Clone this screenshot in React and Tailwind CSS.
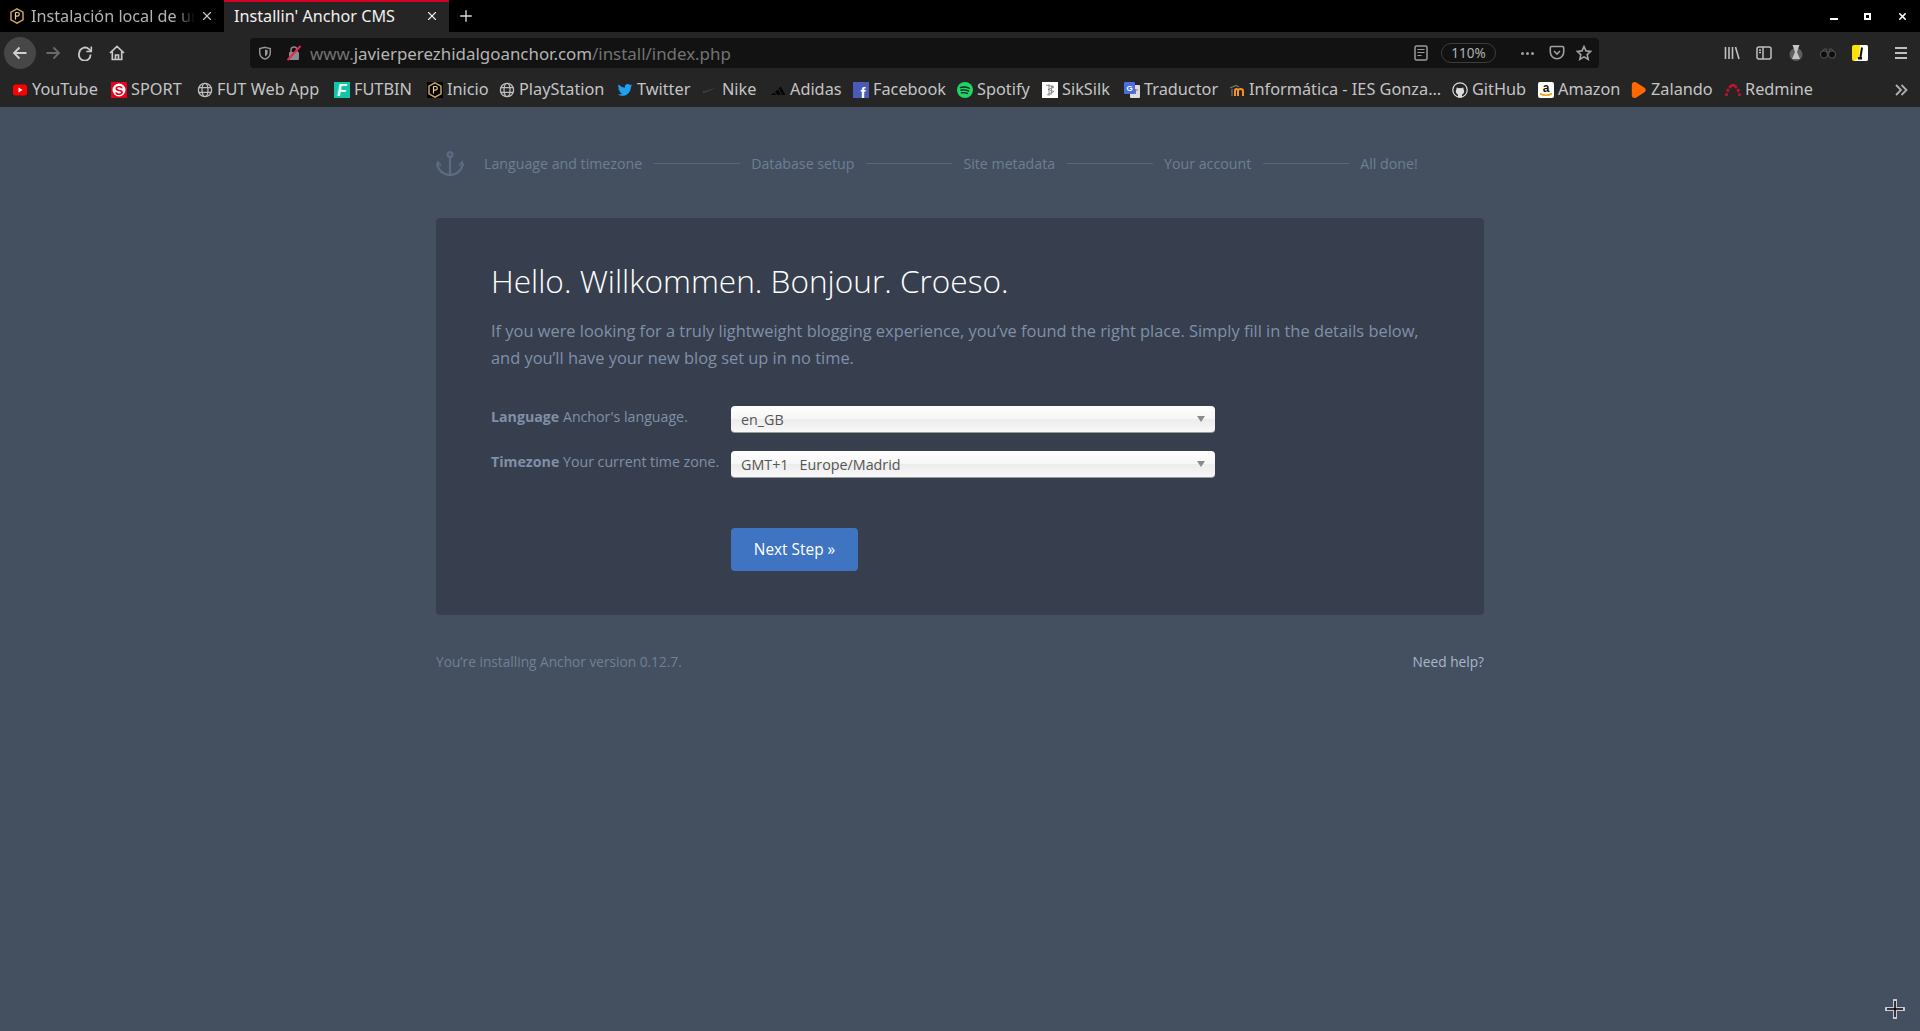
import { Plus, X } from "lucide-react";

const uiFont = "font-['Noto_Sans',sans-serif]";

function HexLogo({ bg = false }) {
  return (
    <svg width="16" height="16" viewBox="0 0 16 16" fill="none">
      {bg && <rect width="16" height="16" fill="#000" />}
      <path d="M8 .8l6 3.400v7.600l-6 3.400-6-3.400V4.200z" stroke="#c9a35a" strokeWidth="1.500" />
      <path d="M6.500 4.500v7M6.500 4.500h2a1.800 1.800 0 010 3.600h-2" stroke="#e6cf98" strokeWidth="1.200" />
    </svg>
  );
}

function Globe() {
  return (
    <svg width="16" height="16" viewBox="0 0 16 16" fill="none" stroke="#bdbdbd" strokeWidth="1.300">
      <circle cx="8" cy="8" r="6.600" />
      <ellipse cx="8" cy="8" rx="3" ry="6.600" />
      <path d="M1.600 5.700h12.800M1.600 10.300h12.800" />
    </svg>
  );
}

const icons = {
  youtube: (
    <svg width="16" height="16" viewBox="0 0 16 16">
      <rect x="1" y="2.500" width="14" height="11" rx="2.500" fill="#f00" />
      <path d="M6.500 5.500l4 2.500-4 2.500z" fill="#fff" />
    </svg>
  ),
  sport: (
    <svg width="16" height="16" viewBox="0 0 16 16">
      <rect width="16" height="16" fill="#e8001c" />
      <circle cx="8" cy="8" r="6.500" fill="#fff" />
      <text x="8" y="12.500" textAnchor="middle" fontSize="13" fontWeight="700" fill="#e8001c" fontFamily="Liberation Sans">S</text>
    </svg>
  ),
  globe: <Globe />,
  futbin: (
    <svg width="16" height="16" viewBox="0 0 16 16">
      <rect width="16" height="16" fill="#0fc7a8" />
      <text x="8" y="14" textAnchor="middle" fontSize="16" fontWeight="700" fontStyle="italic" fill="#fff" fontFamily="Liberation Sans">F</text>
    </svg>
  ),
  hex: <HexLogo bg />,
  twitter: (
    <svg width="16" height="16" viewBox="0 0 24 24" fill="#1da1f2">
      <path d="M23 5.100a9 9 0 01-2.600.7 4.500 4.500 0 002-2.500 9 9 0 01-2.900 1.100 4.500 4.500 0 00-7.700 4.100A12.800 12.800 0 012.500 3.800a4.500 4.500 0 001.400 6 4.500 4.500 0 01-2-.6c0 2.200 1.500 4 3.600 4.500a4.500 4.500 0 01-2 .1 4.500 4.500 0 004.200 3.100A9 9 0 011 18.800 12.800 12.800 0 007.900 20.800c8.300 0 12.900-6.900 12.900-12.900v-.6A9 9 0 0023 5.100z" />
    </svg>
  ),
  nike: (
    <svg width="16" height="16" viewBox="0 0 16 16">
      <path d="M15.500 5L4 10.500c-1.500.6-3 .5-3.300-.5-.1-.6.2-1.200.8-1.900-.2.800.2 1.200 1 1.100z" fill="#3f3f3f" />
    </svg>
  ),
  adidas: (
    <svg width="16" height="16" viewBox="0 0 16 16" fill="#050505">
      <path d="M1 13l3.300-2.500L6 13zM5.200 9.500L8 7.500 11 13H7.200zM8.800 6.200L10.800 4.500 15.500 13H12.300z" />
    </svg>
  ),
  facebook: (
    <svg width="16" height="16" viewBox="0 0 16 16">
      <rect width="16" height="16" fill="#4a5bb5" />
      <text x="10" y="16" textAnchor="middle" fontSize="15" fontWeight="700" fill="#fff" fontFamily="Liberation Sans">f</text>
    </svg>
  ),
  spotify: (
    <svg width="16" height="16" viewBox="0 0 16 16" fill="none">
      <circle cx="8" cy="8" r="8" fill="#1ed760" />
      <path d="M3.500 5.500c3-.8 6-.6 9 .8M4 8.200c2.600-.6 5-.4 7.600.8M4.500 10.800c2-.4 4-.3 6 .7" stroke="#123" strokeWidth="1.400" strokeLinecap="round" />
    </svg>
  ),
  siksilk: (
    <svg width="16" height="16" viewBox="0 0 16 16" fill="none">
      <rect width="16" height="16" fill="#fff" />
      <path d="M4 3l8 2-6 2.500 6 2-7 3.500M7 2v12M10 3l-1 10" stroke="#777" strokeWidth="0.800" />
    </svg>
  ),
  translate: (
    <svg width="16" height="16" viewBox="0 0 16 16">
      <rect x="6" y="3" width="10" height="13" rx="1" fill="#ddd" />
      <path d="M9 8h5M11.500 7v5" stroke="#777" strokeWidth="1" />
      <rect width="11" height="12" rx="1" fill="#4a6ee0" />
      <text x="5.500" y="9" textAnchor="middle" fontSize="8" fontWeight="700" fill="#fff" fontFamily="Liberation Sans">G</text>
    </svg>
  ),
  moodle: (
    <svg width="16" height="16" viewBox="0 0 16 16" fill="none">
      <path d="M1 6l6-2.500L10 5" stroke="#777" strokeWidth="1.200" />
      <path d="M6 14V8.500c0-2 3-2 3 0V14M9 8.500c0-2 5-2.400 5 .5V14" stroke="#f7931e" strokeWidth="2" />
      <path d="M3 14V7" stroke="#666" strokeWidth="1.500" />
    </svg>
  ),
  github: (
    <svg width="16" height="16" viewBox="0 0 16 16" fill="none">
      <circle cx="8" cy="8" r="7.200" stroke="#ddd" strokeWidth="1.200" />
      <path d="M6 15.500v-3c-1.300-.5-2.200-1.700-2.200-3.300 0-.8.300-1.500.7-2-.1-.6 0-1.200.3-1.700.7 0 1.300.3 1.800.7a6 6 0 012.800 0c.5-.4 1.100-.7 1.800-.7.300.5.400 1.100.3 1.700.4.500.7 1.200.7 2 0 1.600-.9 2.800-2.200 3.300v3z" fill="#ddd" />
    </svg>
  ),
  amazon: (
    <svg width="16" height="16" viewBox="0 0 16 16">
      <rect width="16" height="16" rx="2" fill="#fff" />
      <text x="8" y="10" textAnchor="middle" fontSize="12" fontWeight="700" fill="#111" fontFamily="Liberation Sans">a</text>
      <path d="M2 11.500c3.500 2.200 8 2.200 12 0" stroke="#f90" strokeWidth="1.500" fill="none" />
    </svg>
  ),
  zalando: (
    <svg width="16" height="16" viewBox="0 0 16 16">
      <path d="M3.500 0C2 0 .8 1 .8 3v10c0 2 1.200 3 2.700 3 1 0 1.800-.4 3-1.200l7-4.600c1.600-1 1.600-3.400 0-4.400l-7-4.600C5.300.4 4.500 0 3.500 0z" fill="#ff6900" />
    </svg>
  ),
  redmine: (
    <svg width="16" height="16" viewBox="0 0 16 16" fill="none" stroke="#c8102e" strokeWidth="2.600">
      <path d="M1.500 14v-2.800M2.300 9.800l1-2.800M4.200 5.800L7 3.300h2l2.800 2.500M12.700 7l1 2.800M14.500 11.200V14" />
    </svg>
  ),
};

// width = distance to the next bookmark's icon
const bookmarks = [
  ["youtube", "YouTube", 99],
  ["sport", "SPORT", 86],
  ["globe", "FUT Web App", 137],
  ["futbin", "FUTBIN", 93],
  ["hex", "Inicio", 72],
  ["globe", "PlayStation", 118],
  ["twitter", "Twitter", 85],
  ["nike", "Nike", 68],
  ["adidas", "Adidas", 83],
  ["facebook", "Facebook", 104],
  ["spotify", "Spotify", 85],
  ["siksilk", "SikSilk", 82],
  ["translate", "Traductor", 105],
  ["moodle", "Informática - IES Gonza...", 223],
  ["github", "GitHub", 86],
  ["amazon", "Amazon", 93],
  ["zalando", "Zalando", 94],
  ["redmine", "Redmine", 90],
];

const steps = ["Language and timezone", "Database setup", "Site metadata", "Your account", "All done!"];

function TabBar() {
  return (
    <div className="flex h-8 bg-black">
      <div className="flex w-[224px] items-center pl-[9px] pr-[10px]">
        <HexLogo />
        <span className="ml-[6px] w-[164px] overflow-hidden whitespace-nowrap pt-[1px] text-[16.200px] text-[#b3b3b3] [mask-image:linear-gradient(to_right,black_88%,transparent)]">
          Instalación local de un
        </span>
        <X size={14} strokeWidth={2} className="ml-auto text-[#c8c8c8]" />
      </div>
      <div className="relative flex w-[225px] items-center bg-[#252525] pl-[10px] pr-[10px]">
        <div className="absolute inset-x-0 top-0 h-[2px] bg-[#d70022]" />
        <span className="whitespace-nowrap pt-[1px] text-[16.200px] text-[#f0f0f0]">Installin' Anchor CMS</span>
        <X size={14} strokeWidth={2} className="ml-auto text-[#e8e8e8]" />
      </div>
      <div className="flex w-[34px] items-center justify-center">
        <Plus size={18} strokeWidth={1.800} className="text-[#dcdcdc]" />
      </div>
      <div className="ml-auto flex items-center gap-[26px] pr-[12px] text-white">
        <div className="mt-[6px] h-[2px] w-[8px] bg-white" />
        <div className="h-[7px] w-[7px] border-2 border-white" />
        <X size={11} strokeWidth={3.500} />
      </div>
    </div>
  );
}

function ToolBtn({ children, className = "" }) {
  return <div className={`flex h-8 w-8 items-center justify-center ${className}`}>{children}</div>;
}

function Toolbar() {
  return (
    <div className="flex h-[42px] items-center bg-[#252525] pl-[4px]">
      <ToolBtn className="rounded-full bg-[#474747]">
        <svg width="16" height="16" viewBox="0 0 16 16" fill="none" stroke="#d0d0d0" strokeWidth="1.800">
          <path d="M14.500 8H2M7.500 2.500L2 8l5.500 5.500" />
        </svg>
      </ToolBtn>
      <ToolBtn className="ml-[1px]">
        <svg width="16" height="16" viewBox="0 0 16 16" fill="none" stroke="#6a6a6a" strokeWidth="1.800">
          <path d="M1.500 8H14M8.500 2.500L14 8l-5.500 5.500" />
        </svg>
      </ToolBtn>
      <ToolBtn>
        <svg width="16" height="16" viewBox="0 0 16 16" fill="none" stroke="#c8c8c8" strokeWidth="1.800">
          <path d="M13.500 9.500A5.800 5.800 0 112.200 8a5.800 5.800 0 019.800-3.800L14 6" />
          <path d="M14.300 1.500v5h-5" strokeWidth="1.600" />
        </svg>
      </ToolBtn>
      <ToolBtn>
        <svg width="16" height="16" viewBox="0 0 16 16" fill="none" stroke="#c8c8c8" strokeWidth="1.700">
          <path d="M1 8l7-6.500L15 8M3.300 6.500V14.500h9.400V6.500M6.500 14.500V10h3v4.500" />
        </svg>
      </ToolBtn>
      <div className="ml-[117px] flex h-[30px] w-[1349px] items-center rounded-[4px] bg-[#121212] pl-[8px] pr-[7px]">
        <svg width="14" height="14" viewBox="0 0 16 16" fill="none" stroke="#9a9a9a" strokeWidth="1.600">
          <path d="M8 1.500l6 1.500v5c0 3.500-2.500 5.800-6 7-3.500-1.200-6-3.500-6-7V3z" />
          <path d="M8 4l3 .8v3.200c0 1.800-1.200 3-3 4z" fill="#9a9a9a" stroke="none" />
        </svg>
        <div className="relative ml-[14px] h-4 w-4">
          <svg width="16" height="16" viewBox="0 0 16 16" fill="none">
            <rect x="3" y="7" width="10" height="8" rx="1" fill="#8a8a8a" />
            <path d="M5 7V5a3 3 0 016 0v2" stroke="#8a8a8a" strokeWidth="1.500" />
            <path d="M1.500 15L14.500 1" stroke="#e22850" strokeWidth="2" />
          </svg>
        </div>
        <span className="ml-[8px] whitespace-nowrap pt-[1px] text-[16.900px] text-[#727272]">
          www.<span className="text-[#b4b4b4]">javierperezhidalgoanchor.com</span>/install/index.php
        </span>
        <div className="ml-auto flex items-center">
          <svg width="14" height="16" viewBox="0 0 14 16" fill="none" stroke="#9a9a9a" strokeWidth="1.500">
            <rect x="1" y="1" width="12" height="14" rx="1.500" />
            <path d="M3.500 4.500h7M3.500 7.500h7M3.500 10.500h4" strokeWidth="1.200" />
          </svg>
          <div className="ml-[13px] flex h-[20px] w-[55px] items-center justify-center rounded-full border border-[#3d3d3d] text-[13.500px] text-[#b0b0b0]">
            110%
          </div>
          <div className="ml-[25px] flex gap-[2px]">
            <div className="h-[3px] w-[3px] rounded-full bg-[#a0a0a0]" />
            <div className="h-[3px] w-[3px] rounded-full bg-[#a0a0a0]" />
            <div className="h-[3px] w-[3px] rounded-full bg-[#a0a0a0]" />
          </div>
          <svg className="ml-[15px]" width="16" height="16" viewBox="0 0 16 16" fill="none" stroke="#a0a0a0" strokeWidth="1.600">
            <path d="M2.500 1.500h11a1.200 1.200 0 011.200 1.200V7a6.700 6.700 0 01-13.400 0V2.700a1.200 1.200 0 011.200-1.200z" />
            <path d="M5 6l3 3 3-3" />
          </svg>
          <svg className="ml-[11px]" width="16" height="16" viewBox="0 0 16 16" fill="none" stroke="#a0a0a0" strokeWidth="1.600">
            <path d="M8 1.500l2 4.400 4.700.5-3.500 3.200 1 4.700L8 11.900l-4.200 2.400 1-4.700L1.300 6.400 6 5.900z" />
          </svg>
        </div>
      </div>
      <ToolBtn className="ml-[117px]">
        <svg width="16" height="16" viewBox="0 0 16 16" fill="none" stroke="#c0c0c0" strokeWidth="1.600">
          <path d="M1.500 2v12M5 2v12M8.500 2v12M11.500 2l3.500 12" />
        </svg>
      </ToolBtn>
      <ToolBtn>
        <svg width="16" height="16" viewBox="0 0 16 16" fill="none" stroke="#c0c0c0" strokeWidth="1.500">
          <rect x="1" y="2" width="14" height="12" rx="2" />
          <path d="M7 2v12M3 5h2M3 7.500h2" />
        </svg>
      </ToolBtn>
      <ToolBtn>
        <svg width="16" height="16" viewBox="0 0 16 16">
          <circle cx="8" cy="9.500" r="6.500" fill="#5e5e5e" />
          <path d="M4.500 0h7L9 7l3 7H4l3-7z" fill="#c4c4c4" />
        </svg>
      </ToolBtn>
      <ToolBtn>
        <svg width="16" height="16" viewBox="0 0 16 16" fill="#0c0c0c" stroke="#4c4c4c" strokeWidth="1.200">
          <circle cx="4" cy="9.500" r="3.500" />
          <circle cx="12" cy="9.500" r="3.500" />
          <path d="M2.500 6l2-2h2v3h3V4h2l2 2" fill="none" />
        </svg>
      </ToolBtn>
      <ToolBtn>
        <svg width="16" height="16" viewBox="0 0 16 16">
          <rect width="16" height="16" rx="2" fill="#ffe000" />
          <path d="M8 0h6a2 2 0 012 2v12a2 2 0 01-2 2H2l5-3z" fill="#fff" />
          <path d="M10 2.500L8.500 12" stroke="#111" strokeWidth="2" />
          <path d="M6 12h4v2.500H6z" fill="#111" />
        </svg>
      </ToolBtn>
      <ToolBtn className="ml-[9px]">
        <svg width="14" height="14" viewBox="0 0 14 14" stroke="#c0c0c0" strokeWidth="2">
          <path d="M1 2h12M1 7h12M1 12h12" />
        </svg>
      </ToolBtn>
    </div>
  );
}

function BookmarksBar() {
  return (
    <div className="flex h-[33px] items-center bg-[#252525] pb-[2px] pl-[12px] text-[16.300px] text-[#c4c4c4]">
      {bookmarks.map(([icon, label, width]) => (
        <div key={label} className="flex shrink-0 items-center gap-[4px] whitespace-nowrap" style={{ width }}>
          <div className="flex h-4 w-4 items-center justify-center">{icons[icon]}</div>
          <span>{label}</span>
        </div>
      ))}
      <svg className="ml-auto mr-[12px]" width="14" height="14" viewBox="0 0 14 14" fill="none" stroke="#b0b0b0" strokeWidth="1.800">
        <path d="M2 2l5 5-5 5M7.500 2l5 5-5 5" />
      </svg>
    </div>
  );
}

function Stepper() {
  return (
    <div className="flex h-[111px] items-center pt-[2px] text-[14.200px] text-[#6e7e95]">
      <svg className="mr-[20px] -mt-[1px] shrink-0" width="28" height="25" viewBox="0 0 28 25" fill="none" stroke="#5a6b82" strokeWidth="2.200">
        <circle cx="14" cy="3.500" r="2.400" />
        <path d="M14 6v18" />
        <path d="M1.500 13c.5 6.500 6 11 12.500 11s12-4.500 12.500-11" />
        <path d="M0 15l2-4 3 3.500M28 15l-2-4-3 3.500" strokeWidth="1.600" />
      </svg>
      {steps.map((step, i) => (
        <div key={step} className="flex items-center">
          <span className="whitespace-nowrap">{step}</span>
          {i < steps.length - 1 && <div className="mx-[11.500px] h-px w-[86px] bg-[#5a6779]" />}
        </div>
      ))}
    </div>
  );
}

function SelectField({ label, hint, value }) {
  return (
    <div className="flex">
      <label className="w-[240px] pt-[1px] text-[14.200px] leading-[20px] text-[#8090a8]">
        <b className="font-bold">{label}</b> {hint}
      </label>
      <div className="relative h-[27px] w-[484px]">
        <select
          defaultValue={value}
          className="h-full w-full appearance-none rounded-[4px] border-b border-b-[#9a9a9a] bg-[linear-gradient(to_bottom,#ffffff_0%,#f6f6f6_50%,#ececec_50%,#f8f8f8_100%)] pl-[10px] pt-[2px] text-[14.300px] text-[#555555] outline-none"
        >
          <option value={value}>{value}</option>
        </select>
        <div className="absolute right-[10px] top-[10px] h-0 w-0 border-x-[4px] border-t-[6px] border-x-transparent border-t-[#8a8a8a]" />
      </div>
    </div>
  );
}

function Card() {
  return (
    <div className="h-[397px] rounded-[4px] bg-[#373f4e] pl-[55px] pr-[55px] pt-[41px]">
      <h1 className="text-[31.600px] leading-[44px] font-light text-white">Hello. Willkommen. Bonjour. Croeso.</h1>
      <p className="mt-[14px] w-[950px] text-[16.400px] leading-[27px] text-[#8090a8]">
        If you were looking for a truly lightweight blogging experience, you’ve found the right place. Simply fill in the details below, and you’ll have your new blog set up in no time.
      </p>
      <div className="mt-[35px] flex flex-col gap-[18px]">
        <SelectField label="Language" hint="Anchor's language." value="en_GB" />
        <SelectField label="Timezone" hint="Your current time zone." value={"GMT+1\u00a0\u00a0\u00a0Europe/Madrid"} />
      </div>
      <button className="ml-[240px] mt-[50px] h-[43px] w-[127px] rounded-[4px] bg-[#3f74c3] text-[15.400px] text-white">
        Next Step »
      </button>
    </div>
  );
}

export default function App() {
  return (
    <div className="relative flex h-screen flex-col overflow-hidden bg-[#445060]">
      <div className={uiFont}>
        <TabBar />
        <Toolbar />
        <BookmarksBar />
      </div>
      <main className="mx-auto w-[1048px] font-['Open_Sans',sans-serif]">
        <Stepper />
        <Card />
        <div className="mt-[37px] flex justify-between text-[13.700px] leading-[20px]">
          <span className="text-[#708095]">You’re installing Anchor version 0.12.7.</span>
          <a className="text-[#a9b7c9]">Need help?</a>
        </div>
      </main>
      <svg className="absolute left-[1885px] top-[999px]" width="20" height="20" viewBox="0 0 20 20" fill="none">
        <path d="M10 1v18M1 10h18" stroke="#c8ccd2" strokeWidth="4" strokeLinecap="round" />
        <path d="M10 2v16M2 10h16" stroke="#000" strokeWidth="1.500" />
      </svg>
    </div>
  );
}
